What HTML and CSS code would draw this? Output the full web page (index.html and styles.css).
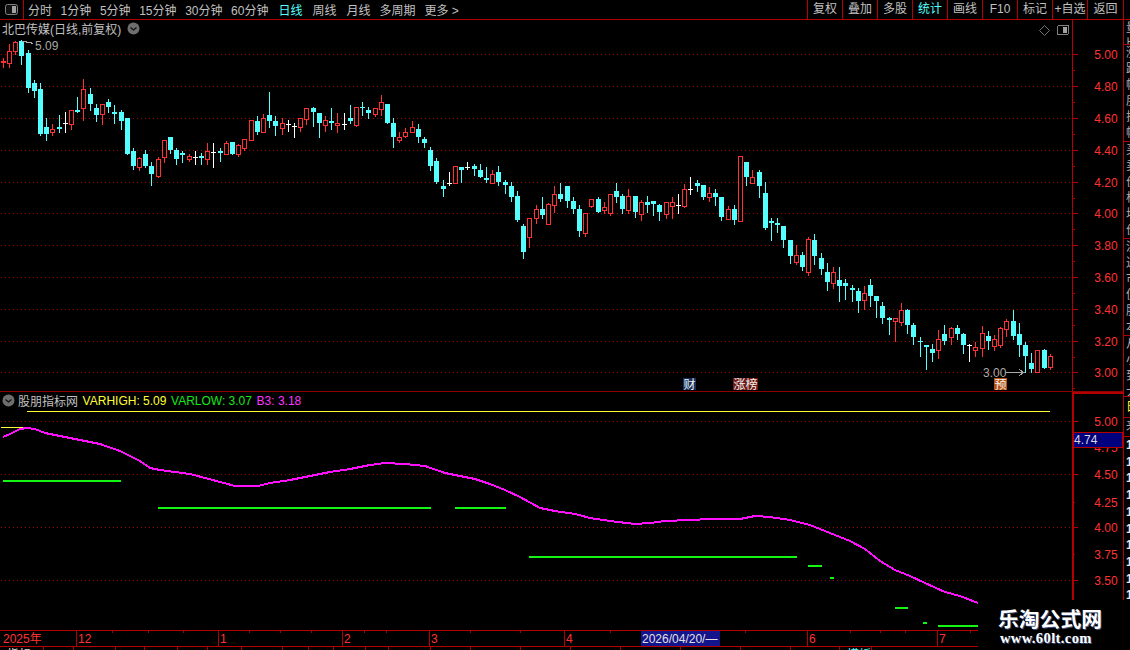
FILE: index.html
```html
<!DOCTYPE html>
<html lang="zh-CN">
<head>
  <meta charset="UTF-8">
  <title>北巴传媒 日线</title>
  <link rel="stylesheet" href="styles.css">
</head>
<body>
  <div class="toolbar">
    <div class="panel-toggle">
      <svg width="13" height="11" viewBox="0 0 13 11"><rect x="0.5" y="0.5" width="12" height="10" rx="2" fill="#111" stroke="#808080"/><rect x="7" y="2" width="4" height="7" fill="#a0a0a0"/></svg>
    </div>
    <div class="periods">
      <span>分时</span>
      <span>1分钟</span>
      <span>5分钟</span>
      <span>15分钟</span>
      <span>30分钟</span>
      <span>60分钟</span>
    </div>
    <div class="lines">
      <span class="active">日线</span>
      <span>周线</span>
      <span>月线</span>
      <span class="tight">多周期</span>
      <span class="tight">更多 &gt;</span>
    </div>
    <div class="actions">
      <span>复权</span>
      <span>叠加</span>
      <span>多股</span>
      <span class="active">统计</span>
      <span>画线</span>
      <span>F10</span>
      <span>标记</span>
      <span>+自选</span>
      <span>返回</span>
    </div>
  </div>

  <div class="workspace">
    <div class="charts">
      <div class="pane pane-main">
        <div class="plot">
          <svg id="main-plot" class="chart" viewBox="0 20 1072 371"></svg>
          <div class="pane-title">
            <span>北巴传媒(日线,前复权)</span>
            <svg class="chevron" width="13" height="13" viewBox="0 0 13 13"><circle cx="6.5" cy="6.5" r="6" fill="#6e6e6e"/><path d="M3.5 5.5l3 2.5 3-2.5" fill="none" stroke="#111" stroke-width="1.3"/></svg>
          </div>
        </div>
        <svg id="main-axis" class="axis" viewBox="1072 20 51 371"></svg>
      </div>

      <div class="pane pane-sub">
        <div class="plot">
          <svg id="sub-plot" class="chart" viewBox="0 392 1072 238"></svg>
          <div class="legend">
            <svg class="chevron" width="13" height="13" viewBox="0 0 13 13"><circle cx="6.5" cy="6.5" r="6" fill="#6e6e6e"/><path d="M3.5 5.5l3 2.5 3-2.5" fill="none" stroke="#111" stroke-width="1.3"/></svg>
            <span class="legend-name">股朋指标网</span>
            <span class="yellow">VARHIGH: 5.09</span>
            <span class="green">VARLOW: 3.07</span>
            <span class="magenta">B3: 3.18</span>
          </div>
        </div>
        <svg id="sub-axis" class="axis" viewBox="1072 392 51 238"></svg>
      </div>

      <svg id="time-axis" class="time-axis" viewBox="0 630 1123 20"></svg>
    </div>

    <div class="side">
      <div class="side-block h1">量比换手率</div>
      <div class="side-block h2">涨跌幅度振幅总额现量内盘外盘</div>
      <div class="side-block h2">买卖价格均价开盘最高最低昨收</div>
      <div class="side-block h2">流通市值股本净资收益市盈率</div>
      <div class="side-block h3">从小到大排</div>
      <div class="side-block h4 yellow">日</div>
      <div class="side-block h5">来</div>
      <div class="side-block h6">1<br>1<br>1<br>1<br>1<br>1<br>1<br>1<br>1<br>1</div>
    </div>
  </div>

  <div class="watermark">
    <div class="wm-name">乐淘公式网</div>
    <div class="wm-url">www.60lt.com</div>
  </div>

  <script src="chart.js"></script>
</body>
</html>
```

FILE: styles.css
```css
* {
  box-sizing: border-box;
}
html, body {
  height: 100%;
}
body {
  margin: 0;
  background: #000;
  color: #c0c0c0;
  font-family: "Liberation Sans", "Noto Sans CJK SC", sans-serif;
  font-size: 12px;
  overflow: hidden;
  position: relative;
}

/* top bar */
.toolbar {
  display: flex;
  align-items: center;
  height: 20px;
  border-bottom: 1px solid #b40000;
  white-space: nowrap;
}
.panel-toggle {
  display: flex;
  align-items: center;
  justify-content: center;
  width: 24px;
  height: 19px;
  padding-right: 1px;
  border-right: 1px solid #b40000;
}
.periods {
  display: flex;
  gap: 8.6px;
  margin-left: 4px;
}
.lines {
  display: flex;
  gap: 10px;
  margin-left: 10px;
}
.lines .tight {
  margin-left: -1px;
}
.actions {
  display: flex;
  margin-left: auto;
  margin-right: 6px;
}
.actions span {
  width: 35px;
  height: 19px;
  line-height: 19px;
  text-align: center;
  border-left: 1px solid #b40000;
}
.actions span:last-child {
  width: 37px;
  border-right: 1px solid #b40000;
}
.active {
  color: #54ffff;
}

/* chart panes */
.workspace {
  display: flex;
  height: 630px;
}
.charts {
  width: 1123px;
  display: flex;
  flex-direction: column;
}
.pane {
  display: flex;
}
.pane-main {
  height: 372px;
  border-bottom: 1px solid #8c0000;
}
.pane-sub {
  height: 238px;
}
.plot {
  position: relative;
  width: 1072px;
}
.chart, .axis, .time-axis {
  display: block;
  shape-rendering: crispEdges;
}
.chart {
  width: 1072px;
  height: 100%;
}
.axis {
  width: 51px;
  height: 100%;
}
.time-axis {
  width: 1123px;
  height: 20px;
}
.pane-title {
  position: absolute;
  top: 0;
  left: 2px;
  display: flex;
  align-items: center;
  gap: 6px;
}
.legend {
  position: absolute;
  top: 1px;
  left: 2px;
  display: flex;
  align-items: center;
  gap: 4.6px;
  height: 15px;
}
.legend-name {
  margin-left: -1.6px;
}
.chevron {
  display: block;
}
.yellow {
  color: #ffff33;
}
.green {
  color: #19e619;
}
.magenta {
  color: #ff33ff;
}

/* svg text */
.axis-label {
  fill: #ff3232;
  font-size: 12px;
  text-anchor: middle;
  dominant-baseline: central;
}
.note {
  fill: #a8a8a8;
  font-size: 12px;
}
.flag {
  font-size: 12px;
  fill: #f2f2f2;
  text-anchor: middle;
}
.time-label {
  fill: #ff3232;
  font-size: 12px;
}
.time-tag {
  fill: #e0e0e0;
  font-size: 12px;
}
.time-tag.cyan {
  fill: #54ffff;
}
.price-tag {
  fill: #d8d8d8;
  font-size: 12px;
}

/* cut-off list on the far right */
.side {
  width: 7px;
  height: 581px;
  overflow: hidden;
  border-left: 1px solid #b40000;
}
.side-block {
  overflow: hidden;
  width: 6px;
  padding-left: 2px;
  border-bottom: 1px solid #b40000;
  line-height: 16px;
  word-break: break-all;
  font-size: 12px;
  color: #b0b0b0;
}
.h1 { height: 25px; }
.h2 { height: 97px; }
.h3 { height: 61px; }
.h4 { height: 21px; padding-top: 2px; }
.h4.yellow { color: #ffff33; }
.h5 { height: 19px; }
.h6 { height: 163px; border: 0; line-height: 16.7px; font-weight: 700; color: #e8e8e8; }

/* logo pasted on the corner */
.watermark {
  position: absolute;
  left: 978px;
  top: 600px;
  width: 152px;
  height: 50px;
  background: #000;
  padding: 6px 0 0 20px;
  color: #fff;
}
.wm-name {
  font-family: "Noto Sans CJK SC", sans-serif;
  font-weight: 700;
  font-size: 20.8px;
  line-height: 25px;
  white-space: nowrap;
  text-shadow: 1px 1px 0 #3b4a78;
}
.wm-url {
  font-family: "Liberation Serif", serif;
  font-weight: 700;
  font-size: 14.5px;
  line-height: 15px;
  margin-left: 2px;
  letter-spacing: 0.4px;
  text-shadow: 1px 1px 0 #3b4a78;
}
```

FILE: chart.js
```js
// [kind, bodyTop, bodyBottom, high, low] in page pixels
// c = falling (cyan), r = rising (red hollow), w = flat (white)
const candles = [
  ['r',61,61,58,67],['r',51,63,44,67],['r',42,51,41,54],['c',41,56,40,64],['c',53,88,50,92],
  ['c',83,91,80,97],['c',89,134,83,135],['c',127,134,118,140],['r',129,132,124,135],['c',127,129,115,132],
  ['w',123,123,112,132],['r',110,124,110,129],['c',110,112,97,112],['r',89,108,79,120],['c',94,104,88,110],
  ['c',108,115,104,121],['r',104,114,104,124],['c',102,107,99,112],['c',112,112,105,123],['c',112,121,110,129],
  ['c',118,154,118,154],['c',151,166,148,169],['r',158,167,157,170],['c',154,166,150,167],['c',166,174,162,185],
  ['r',159,176,157,177],['r',140,157,140,162],['c',137,150,137,153],['c',150,159,148,164],['c',153,153,151,162],
  ['r',156,159,154,161],['w',157,157,151,164],['c',156,158,153,164],['r',151,159,143,164],['w',152,152,143,167],
  ['c',151,153,148,161],['r',143,154,141,154],['c',142,154,142,154],['r',145,154,144,156],['r',139,148,139,150],
  ['r',120,140,120,140],['c',121,132,116,134],['r',118,132,114,132],['c',115,121,92,127],['c',121,126,116,135],
  ['r',123,128,118,134],['w',124,124,120,131],['w',126,126,123,137],['r',118,127,118,131],['r',108,119,108,124],
  ['c',108,112,107,126],['c',113,123,113,137],['r',120,125,116,131],['c',121,123,108,129],['r',123,125,113,132],
  ['w',124,124,113,129],['c',118,121,105,123],['r',107,125,107,126],['c',107,108,102,115],['c',110,113,107,118],
  ['r',108,114,108,116],['r',102,109,95,115],['c',104,123,104,123],['c',123,137,118,147],['r',137,140,132,142],
  ['r',132,136,128,137],['r',127,132,121,132],['c',129,137,124,142],['c',139,143,137,147],['c',150,166,147,170],
  ['c',161,182,158,183],['c',186,189,180,196],['w',183,183,172,185],['r',166,183,166,183],['c',167,170,167,182],
  ['w',167,167,162,169],['c',166,169,164,175],['c',170,177,164,177],['c',178,180,167,182],['r',174,183,170,183],
  ['c',172,182,166,185],['c',182,185,180,193],['c',186,197,182,201],['c',196,220,191,221],['c',226,252,224,258],
  ['r',218,237,218,247],['r',209,218,205,223],['c',209,215,197,218],['r',204,224,203,224],['r',194,205,186,212],
  ['c',194,199,183,201],['c',186,201,186,207],['c',201,209,197,213],['c',209,231,205,236],['r',213,233,213,236],
  ['r',199,206,199,207],['c',199,212,197,212],['r',207,210,202,213],['r',194,213,194,215],['c',191,197,183,202],
  ['c',196,209,194,213],['r',196,210,189,213],['c',196,212,196,217],['r',202,214,200,220],['c',202,205,196,212],
  ['c',201,204,201,215],['c',205,212,204,220],['r',202,214,202,218],['r',202,206,197,218],['w',205,205,194,213],
  ['r',189,206,184,207],['w',189,189,177,194],['c',183,186,180,191],['c',185,197,185,199],['r',193,197,187,201],
  ['c',193,197,189,205],['c',197,217,197,220],['r',209,219,206,219],['c',209,220,205,224],['r',156,221,156,221],
  ['c',162,177,162,185],['r',177,183,170,183],['c',172,186,170,197],['c',193,228,182,229],['c',221,223,218,240],
  ['c',223,223,218,232],['c',226,240,226,247],['c',240,256,240,263],['r',255,262,245,264],['c',255,267,252,270],
  ['r',239,272,237,275],['c',240,256,234,264],['c',258,269,253,274],['c',272,282,263,290],['r',272,283,267,288],
  ['c',280,286,267,301],['c',283,286,279,299],['c',288,290,285,301],['c',291,301,288,312],['r',293,300,286,309],
  ['c',285,296,279,306],['c',296,301,296,317],['c',306,318,302,323],['c',318,320,317,334],['r',318,321,318,341],
  ['r',310,322,303,325],['c',310,325,309,333],['c',325,337,323,344],['c',341,342,337,356],['c',345,347,345,369],
  ['c',349,353,344,361],['r',339,350,330,358],['c',334,341,325,344],['r',328,337,327,344],['c',328,334,325,339],
  ['c',334,345,333,353],['w',345,345,344,361],['r',347,350,342,356],['r',333,348,326,356],['c',336,341,331,349],
  ['r',339,346,335,350],['r',328,345,327,347],['r',321,329,319,336],['c',321,336,310,339],['c',334,345,323,356],
  ['c',345,356,342,372],['c',363,369,353,372],['r',350,372,350,372],['c',350,368,349,368],['r',356,367,354,369]
];

const COLORS = { c: '#54ffff', r: '#ff3232', w: '#ffffff' };
const DOT = '#a00000';
const LINE = '#b40000';

function rect(x, y, w, h, fill) {
  return `<rect x="${x}" y="${y}" width="${w}" height="${h}" fill="${fill}"/>`;
}

function dotted(y, x2) {
  return `<line x1="1" x2="${x2}" y1="${y + 0.5}" y2="${y + 0.5}" stroke="${DOT}" stroke-dasharray="1 3"/>`;
}

function text(x, y, cls, str) {
  return `<text x="${x}" y="${y}" class="${cls}">${str}</text>`;
}

function candleMarkup(c, i) {
  const [kind, top, bot, high, low] = c;
  const col = Math.floor(3.3 + 6.195 * i);
  const color = COLORS[kind];
  let out = rect(col, high, 1, low - high + 1, color);
  if (top === bot || kind === 'w') {
    out += rect(col - 2, top, 5, kind === 'w' ? 1 : 2, color);
  } else if (kind === 'c') {
    out += rect(col - 2, top, 5, bot - top, color);
  } else {
    out += `<rect x="${col - 1.5}" y="${top + 0.5}" width="4" height="${bot - top}" fill="#000" stroke="${color}"/>`;
  }
  return out;
}

// upper pane
const mainLevels = [
  ['5.00', 54], ['4.80', 86], ['4.60', 118], ['4.40', 150], ['4.20', 182], ['4.00', 213],
  ['3.80', 245], ['3.60', 277], ['3.40', 309], ['3.20', 341], ['3.00', 372]
];

let main = mainLevels.map(l => dotted(l[1], 1072)).join('');
main += candles.map(candleMarkup).join('');

// high and low notes
main += `<polyline points="22,42 25,41 28,43 30,42 33,44" fill="none" stroke="#a8a8a8"/>`;
main += text(35, 50, 'note', '5.09');
main += text(983, 377, 'note', '3.00');
main += `<path d="M1005 372.5H1023M1019 369.5l5 3-5 3" fill="none" stroke="#a8a8a8"/>`;

// event flags
main += rect(683, 378, 13, 12, '#14305c') + text(689.5, 389, 'flag', '财');
main += rect(733, 378, 25, 12, '#6e1a14') + text(745.5, 389, 'flag', '涨榜');
main += rect(994, 378, 13, 12, '#b4500f') + text(1000.5, 389, 'flag', '预');

// corner icons
main += `<path d="M1044.5 25.5l5 5-5 5-5-5z" fill="none" stroke="#707070" shape-rendering="auto"/>`;
main += `<rect x="1057.5" y="25.5" width="11" height="9" rx="1.5" fill="none" stroke="#808080"/>`;
main += rect(1063, 27, 4, 6, '#a0a0a0');

document.getElementById('main-plot').innerHTML = main;

let mainAxis = rect(1072, 20, 1, 371, LINE);
mainLevels.forEach(l => {
  mainAxis += rect(1072, l[1], 6, 1, LINE);
  mainAxis += rect(1072, l[1] + 16, 3, 1, LINE);
  mainAxis += text(1106, l[1] + 0.5, 'axis-label', l[0]);
});
document.getElementById('main-axis').innerHTML = mainAxis;

// lower pane
const b3 = [
  [3,437],[10,434],[20,429],[27,428],[35,429],[45,433],[60,436],[80,440],[100,444],[120,451],[130,456],
  [140,461],[150,468],[160,470],[175,472],[190,474],[205,478],[220,482],[235,486],[258,486],[270,483],
  [290,480],[310,476],[330,472],[350,469],[370,465],[385,463],[405,464],[425,466],[445,473],[460,476],
  [475,479],[490,484],[505,490],[520,497],[540,508],[555,511],[575,514],[590,518],[610,521],[635,524],
  [650,523],[665,521],[690,520],[710,519],[740,519],[755,516],[770,517],[790,520],[810,525],[830,533],
  [850,541],[865,549],[880,561],[895,570],[910,576],[925,583],[945,592],[960,596],[978,603]
];
const lows = [
  [3,121,480],[158,431,507],[455,506,507],[529,797,556],[808,822,565],[830,834,577],
  [895,908,607],[923,927,622],[938,978,625]
];

let sub = [421, 474, 527, 580].map(y => dotted(y, 1072)).join('');
sub += rect(27, 411, 1023, 1, '#ffff33');
sub += rect(1, 427, 28, 1, '#ffff33');
lows.forEach(l => { sub += rect(l[0], l[2], l[1] - l[0], 2, '#14f514'); });
sub += `<polyline points="${b3.map(p => p.join(',')).join(' ')}" fill="none" stroke="#ff10ff" stroke-width="2"/>`;
document.getElementById('sub-plot').innerHTML = sub;

const subLevels = [
  ['5.00', 421, 6], ['4.75', 447, 3], ['4.50', 474, 6], ['4.25', 502, 3],
  ['4.00', 527, 6], ['3.75', 554, 3], ['3.50', 580, 6]
];
let subAxis = rect(1072, 392, 2, 238, LINE) + rect(1072, 392, 51, 2, LINE);
subLevels.forEach(l => {
  subAxis += rect(1072, l[1], l[2], 1, LINE);
  subAxis += text(1106, l[1] + 1, 'axis-label', l[0]);
});
subAxis += rect(1073, 432, 50, 16, LINE) + rect(1074, 433, 48, 14, '#00007f');
subAxis += text(1074, 444, 'price-tag', '4.74');
document.getElementById('sub-axis').innerHTML = subAxis;

// date axis
const months = [[76, '12'], [218, '1'], [342, '2'], [429, '3'], [564, '4'], [807, '6'], [937, '7']];
const minor = [112, 148, 183, 249, 280, 311, 364, 386, 470, 520, 610, 680, 745, 850, 880, 905, 970];
const lower = [43, 73, 115, 144, 177, 207, 241, 282, 308, 333, 365, 388, 430, 470, 520, 570, 620, 680, 740, 790, 839, 871];

let axis = rect(0, 630, 978, 1, LINE) + rect(0, 646, 978, 1, LINE);
axis += text(3, 643, 'time-label', '2025年');
months.forEach(m => {
  axis += rect(m[0], 630, 1, 16, LINE);
  axis += text(m[0] + 2, 643, 'time-label', m[1]);
});
minor.forEach(x => { axis += rect(x, 631, 1, 2, LINE); });
lower.forEach(x => { axis += rect(x, 647, 1, 3, LINE); });
axis += rect(641, 631, 79, 15, '#14148c');
axis += text(642, 643, 'time-tag', '2026/04/20/—');
axis += text(7, 659, 'time-tag', '指标');
axis += text(847, 659, 'time-tag cyan', '模板');
document.getElementById('time-axis').innerHTML = axis;
```
